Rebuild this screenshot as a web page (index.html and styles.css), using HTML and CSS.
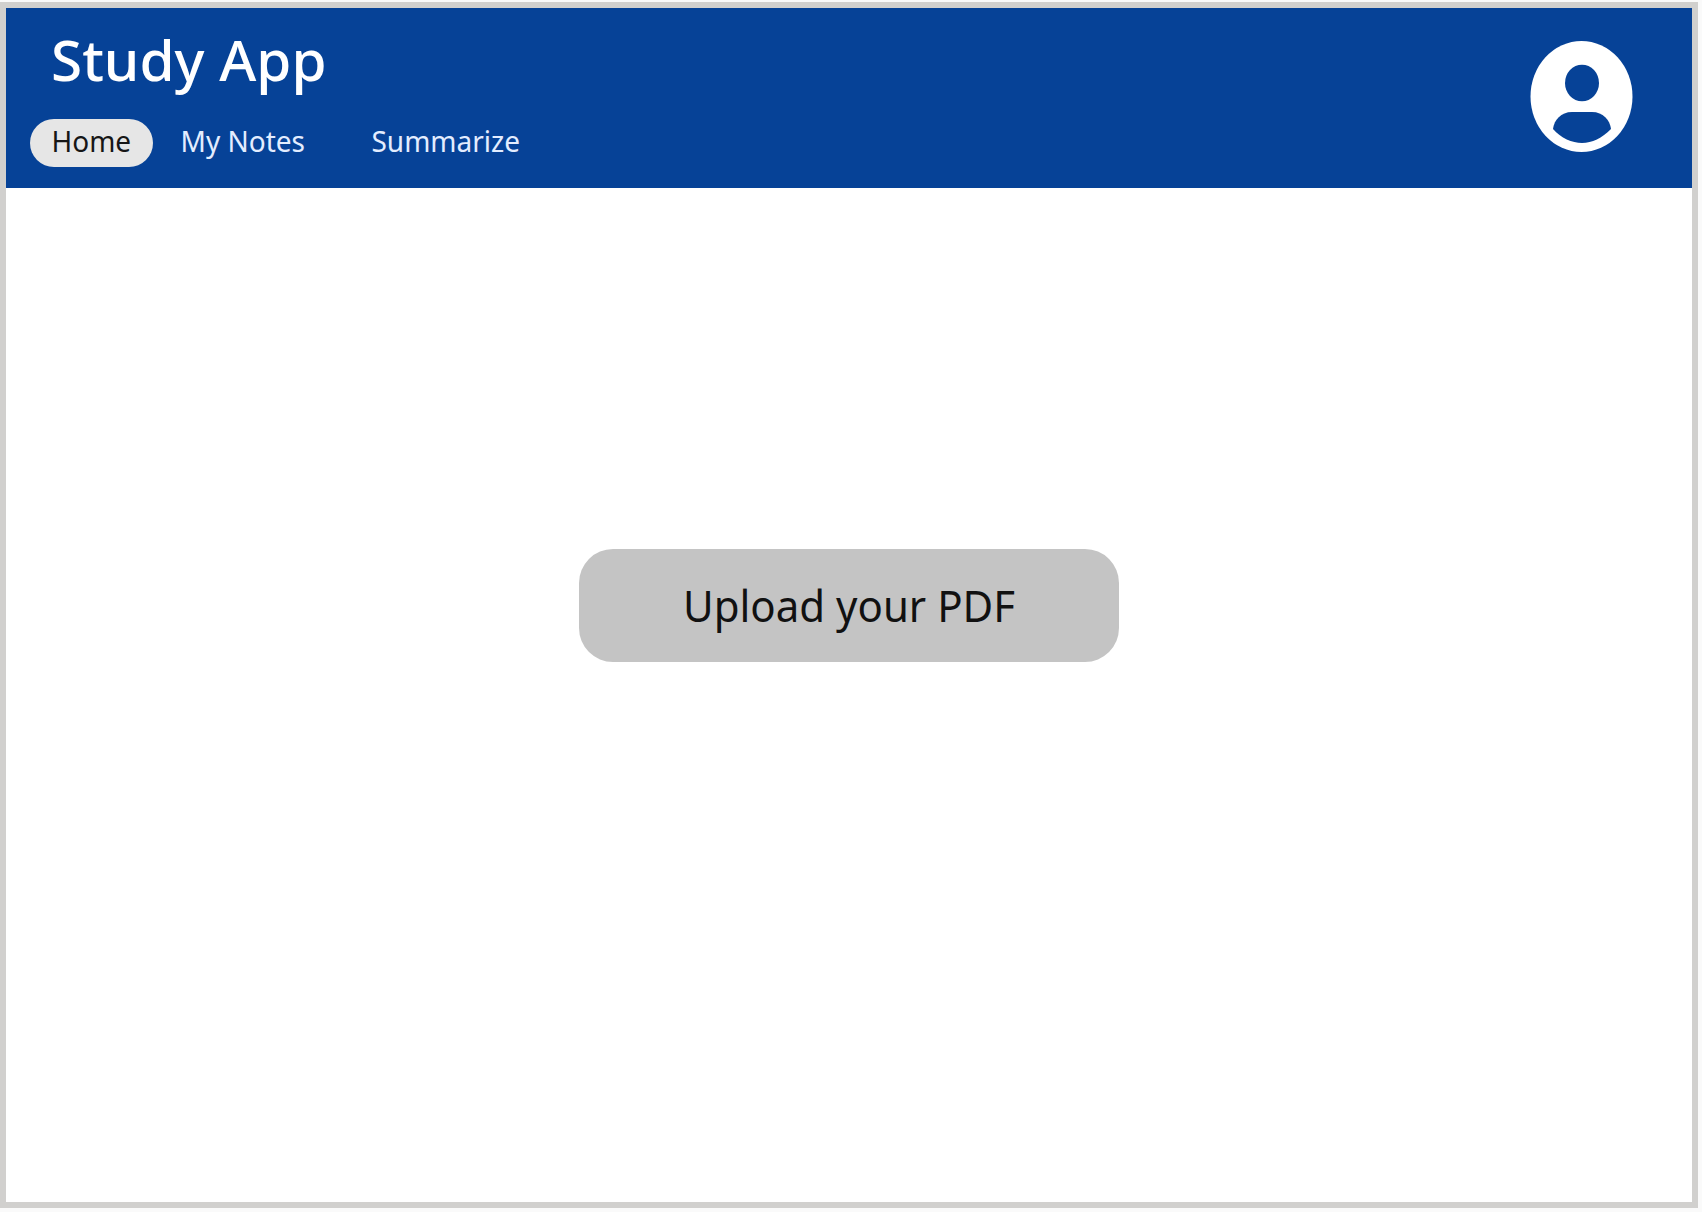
FILE: index.html
```html
<!DOCTYPE html>
<html lang="en">
<head>
<meta charset="utf-8">
<title>Study App</title>
<link rel="stylesheet" href="styles.css">
</head>
<body>
<div class="frame">
  <header class="header">
    <div class="brand">
      <h1 class="title">Study App</h1>
      <nav class="nav">
        <a class="nav-item active"><span class="label">Home</span></a>
        <a class="nav-item notes"><span class="label">My Notes</span></a>
        <a class="nav-item summarize"><span class="label">Summarize</span></a>
      </nav>
    </div>
    <svg class="avatar" width="103" height="112" viewBox="0 0 103 112" aria-label="Account">
      <ellipse cx="51.5" cy="55.5" rx="51" ry="55.5" fill="#fff"/>
      <ellipse cx="52" cy="42" rx="17" ry="18.3" fill="#064297"/>
      <path d="M23 88C24 79 31 71 42 71H62C73 71 80 79 81 88C72 97 62 102 52 102S31 97 23 88Z" fill="#064297"/>
    </svg>
  </header>
  <main class="content">
    <button class="upload"><span class="upload-label">Upload your PDF</span></button>
  </main>
</div>
</body>
</html>
```
FILE: styles.css
```css
* { box-sizing: border-box; }
body {
  margin: 0;
  padding: 2px 4px 4px 0;
  height: 1212px;
  background: #fafafa;
  font-family: "Noto Sans", sans-serif;
  overflow: hidden;
}
.frame {
  display: flex;
  flex-direction: column;
  height: 1206px;
  border: 6px solid #d1d0ce;
  background: #fff;
}
.header {
  display: flex;
  justify-content: space-between;
  height: 180px;
  padding: 0 59px 0 24px;
  background: #064297;
}
.title {
  margin: 19px 0 0 21px;
  width: max-content;
  font-size: 56px;
  font-weight: 500;
  line-height: 64px;
  color: #fff;
  transform: scaleX(1.012);
  transform-origin: left center;
}
.nav { display: flex; margin-top: 28px; }
.nav-item {
  height: 48px;
  line-height: 42px;
  font-size: 28px;
  color: #e3edff;
  white-space: nowrap;
}
.label { display: inline-block; transform: scaleY(1.05); }
.active {
  width: 123px;
  padding-left: 21.5px;
  border-radius: 24px;
  background: #e6e6e6;
  color: #161616;
}
.notes { width: 191px; margin-left: 27.5px; }
.avatar { margin-top: 33px; }
.content {
  flex: 1;
  display: flex;
  justify-content: center;
  padding-top: 361px;
}
.upload {
  width: 540px;
  height: 113px;
  padding: 0;
  border: 0;
  border-radius: 34px;
  background: #c4c4c4;
  color: #111;
  font: 400 42px/60px "Noto Sans", sans-serif;
}
.upload-label { display: inline-block; transform: scaleY(1.03); }
```
